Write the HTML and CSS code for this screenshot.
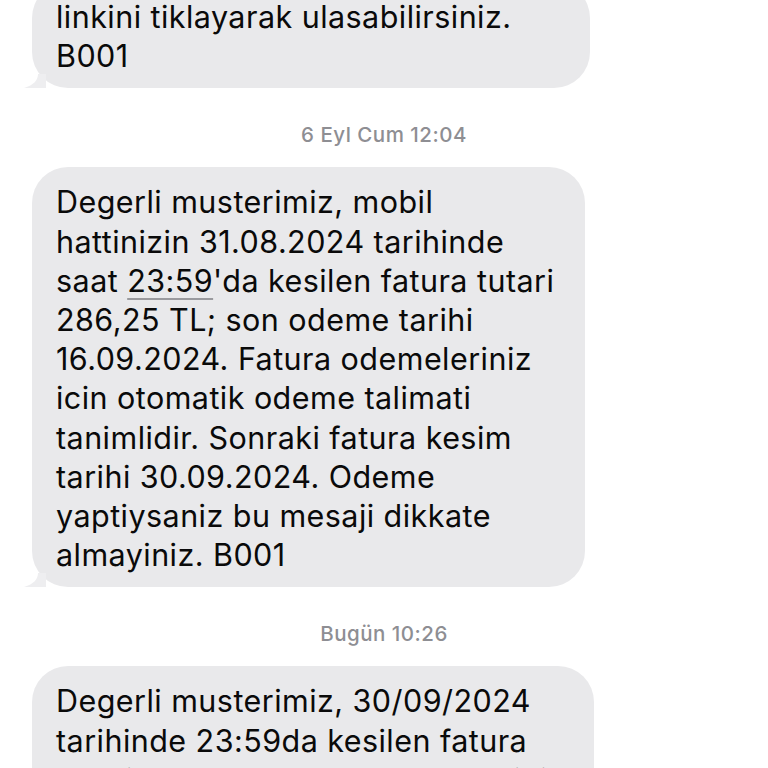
FILE: index.html
```html
<!DOCTYPE html>
<html lang="tr">
<head>
<meta charset="utf-8">
<title>Mesajlar</title>
<link rel="stylesheet" href="styles.css">
</head>
<body>
<main class="thread">
  <div class="bubble bubble-first">
    <p class="text">linkini tiklayarak ulasabilirsiniz.<br>B001</p>
    <svg class="tail" viewBox="0 0 24 14" aria-hidden="true"><path d="M16 0 C16 6 12 11 2 14 L24 14 L24 0 Z"/></svg>
  </div>
  <div class="stamp">6 Eyl Cum 12:04</div>
  <div class="bubble bubble-second">
    <p class="text">Degerli musterimiz, mobil<br>hattinizin 31.08.2024 tarihinde<br>saat <span class="link">23:59</span>'da kesilen fatura tutari<br>286,25 TL; son odeme tarihi<br>16.09.2024. Fatura odemeleriniz<br>icin otomatik odeme talimati<br>tanimlidir. Sonraki fatura kesim<br>tarihi 30.09.2024. Odeme<br>yaptiysaniz bu mesaji dikkate<br>almayiniz. B001</p>
    <svg class="tail" viewBox="0 0 24 14" aria-hidden="true"><path d="M16 0 C16 6 12 11 2 14 L24 14 L24 0 Z"/></svg>
  </div>
  <div class="stamp">Bugün 10:26</div>
  <div class="bubble bubble-third">
    <p class="text">Degerli musterimiz, 30/09/2024<br>tarihinde 23:59da kesilen fatura<br>tutari 1241,5 TL; son odeme tarihi<br>14.10.2024.</p>
  </div>
</main>
</body>
</html>
```
FILE: styles.css
```css
html, body {
  margin: 0;
  padding: 0;
  background: #ffffff;
  overflow: hidden;
}

.thread {
  display: flex;
  flex-direction: column;
  align-items: flex-start;
  padding-left: 32px;
  margin-top: -18px;
  font-family: "Inter", "Liberation Sans", sans-serif;
}

.bubble {
  position: relative;
  box-sizing: border-box;
  background: #e9e9eb;
  border-radius: 36px;
  padding: 15px 24px 13px 24px;
}

.bubble-first { width: 558px; }
.bubble-second { width: 553px; }
.bubble-third { width: 562px; }

.text {
  margin: 0;
  font-size: 30.5px;
  line-height: 39.2px;
  color: #0a0a0a;
  white-space: nowrap;
  letter-spacing: 0.45px;
}

.link {
  text-decoration: underline;
  text-decoration-color: #9a9a9e;
  text-decoration-thickness: 1.5px;
  text-underline-offset: 6px;
}

.tail {
  position: absolute;
  left: -10px;
  bottom: 0;
  width: 24px;
  height: 14px;
  fill: #eeeef0;
}

.stamp {
  align-self: center;
  margin-left: -32px;
  margin-top: 35px;
  margin-bottom: 20px;
  font-size: 20.5px;
  line-height: 24px;
  letter-spacing: 0.5px;
  color: #8e8e93;
  font-weight: 500;
}
```
